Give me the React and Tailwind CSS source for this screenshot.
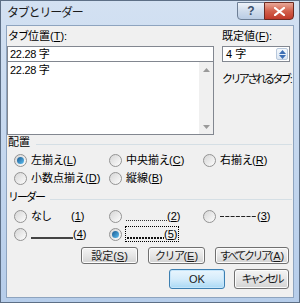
import React from "react";

const FONT = "font-['Liberation_Sans','Noto_Sans_CJK_JP',sans-serif]";

function U({ children }) {
  return <span className="underline underline-offset-[1px]">{children}</span>;
}

function K({ children, t }) {
  return <span className={t}>{children}</span>;
}

function Radio({ checked }) {
  return (
    <span className="inline-flex w-[13px] h-[13px] shrink-0 items-center justify-center rounded-full border border-[#939393] bg-gradient-to-br from-[#d6d6d6] to-[#fdfdfd]">
      {checked && (
        <span className="w-[7px] h-[7px] rounded-full bg-gradient-to-br from-[#1a5a91] to-[#5fc0f2]" />
      )}
    </span>
  );
}

function Btn({ children, w, h, def }) {
  return (
    <div
      className={
        "flex items-center justify-center whitespace-nowrap rounded-[3px] border text-[11px] leading-[14px] text-[#1a1a1a] " +
        w +
        " " +
        h +
        " " +
        (def
          ? "border-[#3c7fb1] bg-gradient-to-b from-[#e9f5fd] via-[#d5ecfb] to-[#a9d9f5] shadow-[inset_0_0_0_1px_#c6e6fb]"
          : "border-[#707070] bg-gradient-to-b from-[#f4f4f4] via-[#e6e6e6] to-[#d3d3d3] shadow-[inset_0_0_0_1px_#fcfcfc]")
      }
    >
      {children}
    </div>
  );
}

function Triangle({ up, color = "#9a9a9a" }) {
  return (
    <svg width="7" height="4" viewBox="0 0 7 4">
      {up ? <path d="M0 4 L3.5 0 L7 4 Z" fill={color} /> : <path d="M0 0 L3.5 4 L7 0 Z" fill={color} />}
    </svg>
  );
}

function GroupHeader({ children }) {
  return (
    <div className="flex h-[14px] items-center">
      <span className="pl-px text-[11px] leading-[14px] text-black">{children}</span>
      <div className="ml-[6px] mr-[1px] mt-[4px] h-px flex-1 bg-[#d5dfe5]" />
    </div>
  );
}

export default function App() {
  return (
    <div className={"flex h-[303px] w-[300px] flex-col overflow-hidden border border-[#5d6f86] bg-gradient-to-b from-[#d3e1f2] to-[#b6cdea] " + FONT}>
      {/* title bar */}
      <div className="flex h-[24px] shrink-0 items-start justify-between pl-[6px] pr-[5px]">
        <span className="mt-[4px] text-[12px] leading-[16px] tracking-[-1.2px] text-[#1b1b1b]">タブとリーダー</span>
        <div className="flex pt-px">
          <div className="flex h-[18px] w-[28px] items-center justify-center rounded-bl-[4px] border border-[#6d7f96] bg-gradient-to-b from-[#eef3fa] via-[#cfdcec] to-[#b9cce4] text-[12px] font-bold leading-none text-[#3a4f6c]">
            ?
          </div>
          <div className="-ml-px flex h-[18px] w-[30px] items-center justify-center rounded-br-[4px] border border-[#6b2b22] bg-gradient-to-b from-[#e8a899] via-[#d2604c] to-[#c0392a]">
            <svg width="11" height="9" viewBox="0 0 11 9">
              <path d="M1 1 L10 8 M10 1 L1 8" stroke="#ffffff" strokeWidth="2.2" strokeLinecap="square" />
            </svg>
          </div>
        </div>
      </div>

      {/* client area */}
      <div className="mx-[5px] mb-[4px] flex min-w-0 flex-1 flex-col border border-[#8ea4bf] bg-[#f0f0f0] text-[11px] leading-[14px] text-black">
        {/* top */}
        <div className="flex pt-[3px]">
          <div className="flex w-[207px] flex-col">
            <span className="h-[14px] pl-[1px]"><K t="tracking-[-1px]">タブ</K>位置(<U>T</U>):</span>
            <div className="mt-[3px] flex h-[16px] items-center border border-[#828790] bg-white pl-[2px] tracking-[-0.3px]">22.28 字</div>
            <div className="flex h-[73px] border border-t-0 border-[#828790] bg-white">
              <div className="flex-1 pl-[2px] pt-px tracking-[-0.3px]">22.28 字</div>
              <div className="flex w-[14px] flex-col justify-between bg-[#f0f0f0] pb-[5px] pt-[6px]">
                <div className="flex justify-center"><Triangle up /></div>
                <div className="flex justify-center"><Triangle /></div>
              </div>
            </div>
          </div>
          <div className="ml-[8px] flex w-[70px] flex-col">
            <span className="h-[14px]">既定値(<U>F</U>):</span>
            <div className="mt-[3px] flex h-[16px] w-[68px] items-center border border-[#828790] bg-white pl-[3px]">
              <span className="flex-1">4 字</span>
              <div className="mr-[1px] flex h-[12px] w-[12px] flex-col items-center justify-center gap-[1px] rounded-[2px] border border-[#b8c8dc] bg-gradient-to-b from-[#f4f8fc] to-[#dbe6f2]">
                <Triangle up color="#3d6fb5" />
                <Triangle color="#3d6fb5" />
              </div>
            </div>
            <span className="mt-[10px] whitespace-nowrap tracking-[-2.6px]">クリアされるタブ :</span>
          </div>
        </div>

        {/* alignment */}
        <GroupHeader>配置</GroupHeader>
        <div className="mt-[2px] grid grid-cols-[95px_94px_1fr] pl-[7px]">
          <div className="flex h-[18px] items-center gap-[4px]"><Radio checked /><span>左揃<K t="tracking-[-1px]">え</K>(<U>L</U>)</span></div>
          <div className="flex h-[18px] items-center gap-[4px]"><Radio /><span>中央揃<K t="tracking-[-1px]">え</K>(<U>C</U>)</span></div>
          <div className="flex h-[18px] items-center gap-[4px]"><Radio /><span>右揃<K t="tracking-[-1px]">え</K>(<U>R</U>)</span></div>
          <div className="flex h-[18px] items-center gap-[4px]"><Radio /><span>小数点揃<K t="tracking-[-1px]">え</K>(<U>D</U>)</span></div>
          <div className="flex h-[18px] items-center gap-[4px]"><Radio /><span>縦線(<U>B</U>)</span></div>
          <div />
        </div>

        {/* leader */}
        <div className="mt-[3px]">
          <GroupHeader><K t="tracking-[-2px]">リーダー</K></GroupHeader>
        </div>
        <div className="mt-[3px] grid grid-cols-[95px_94px_1fr] pl-[7px]">
          <div className="flex h-[18px] items-center gap-[4px]">
            <Radio />
            <span className="w-[36px] tracking-[-1px]">なし</span>
            <span>(<U>1</U>)</span>
          </div>
          <div className="flex h-[18px] items-center gap-[4px]">
            <Radio />
            <svg width="41" height="14" viewBox="0 0 41 14" className="shrink-0">
              <line x1="0" y1="11.5" x2="41" y2="11.5" stroke="#333" strokeWidth="1" strokeDasharray="1 1" />
            </svg>
            <span className="-ml-[4px]">(<U>2</U>)</span>
          </div>
          <div className="flex h-[18px] items-center gap-[4px]">
            <Radio />
            <svg width="37" height="14" viewBox="0 0 37 14" className="shrink-0">
              <line x1="0" y1="7.5" x2="37" y2="7.5" stroke="#222" strokeWidth="1" strokeDasharray="4 1.3" />
            </svg>
            <span className="-ml-[4px]">(<U>3</U>)</span>
          </div>
          <div className="flex h-[18px] items-center gap-[4px]">
            <Radio />
            <span className="mt-[8px] h-[2px] w-[42px] shrink-0 bg-[#444]" />
            <span className="-ml-[4px]">(<U>4</U>)</span>
          </div>
          <div className="flex h-[18px] items-center gap-[3px]">
            <Radio checked />
            <span className="flex h-[16px] items-center border border-dotted border-black pl-px pr-px">
              <svg width="37" height="14" viewBox="0 0 37 14" className="shrink-0">
                <line x1="0" y1="11" x2="37" y2="11" stroke="#111" strokeWidth="2" strokeDasharray="2 1" />
              </svg>
              <span>(<U>5</U>)</span>
            </span>
          </div>
          <div />
        </div>

        {/* buttons */}
        <div className="mt-[4px] flex justify-end gap-[10px] pr-[4px]">
          <Btn w="w-[57px]" h="h-[17px]">設定(<U>S</U>)</Btn>
          <Btn w="w-[57px]" h="h-[17px]"><K t="tracking-[-1.5px]">クリア</K>(<U>E</U>)</Btn>
          <Btn w="w-[74px]" h="h-[17px]"><K t="tracking-[-2.5px]">すべてクリア</K>(<U>A</U>)</Btn>
        </div>
        <div className="mt-[5px] flex justify-end gap-[9px] pr-[4px]">
          <Btn w="w-[56px]" h="h-[20px]" def>OK</Btn>
          <Btn w="w-[55px]" h="h-[20px]"><K t="tracking-[-3px]">キャンセル</K></Btn>
        </div>
      </div>
    </div>
  );
}
